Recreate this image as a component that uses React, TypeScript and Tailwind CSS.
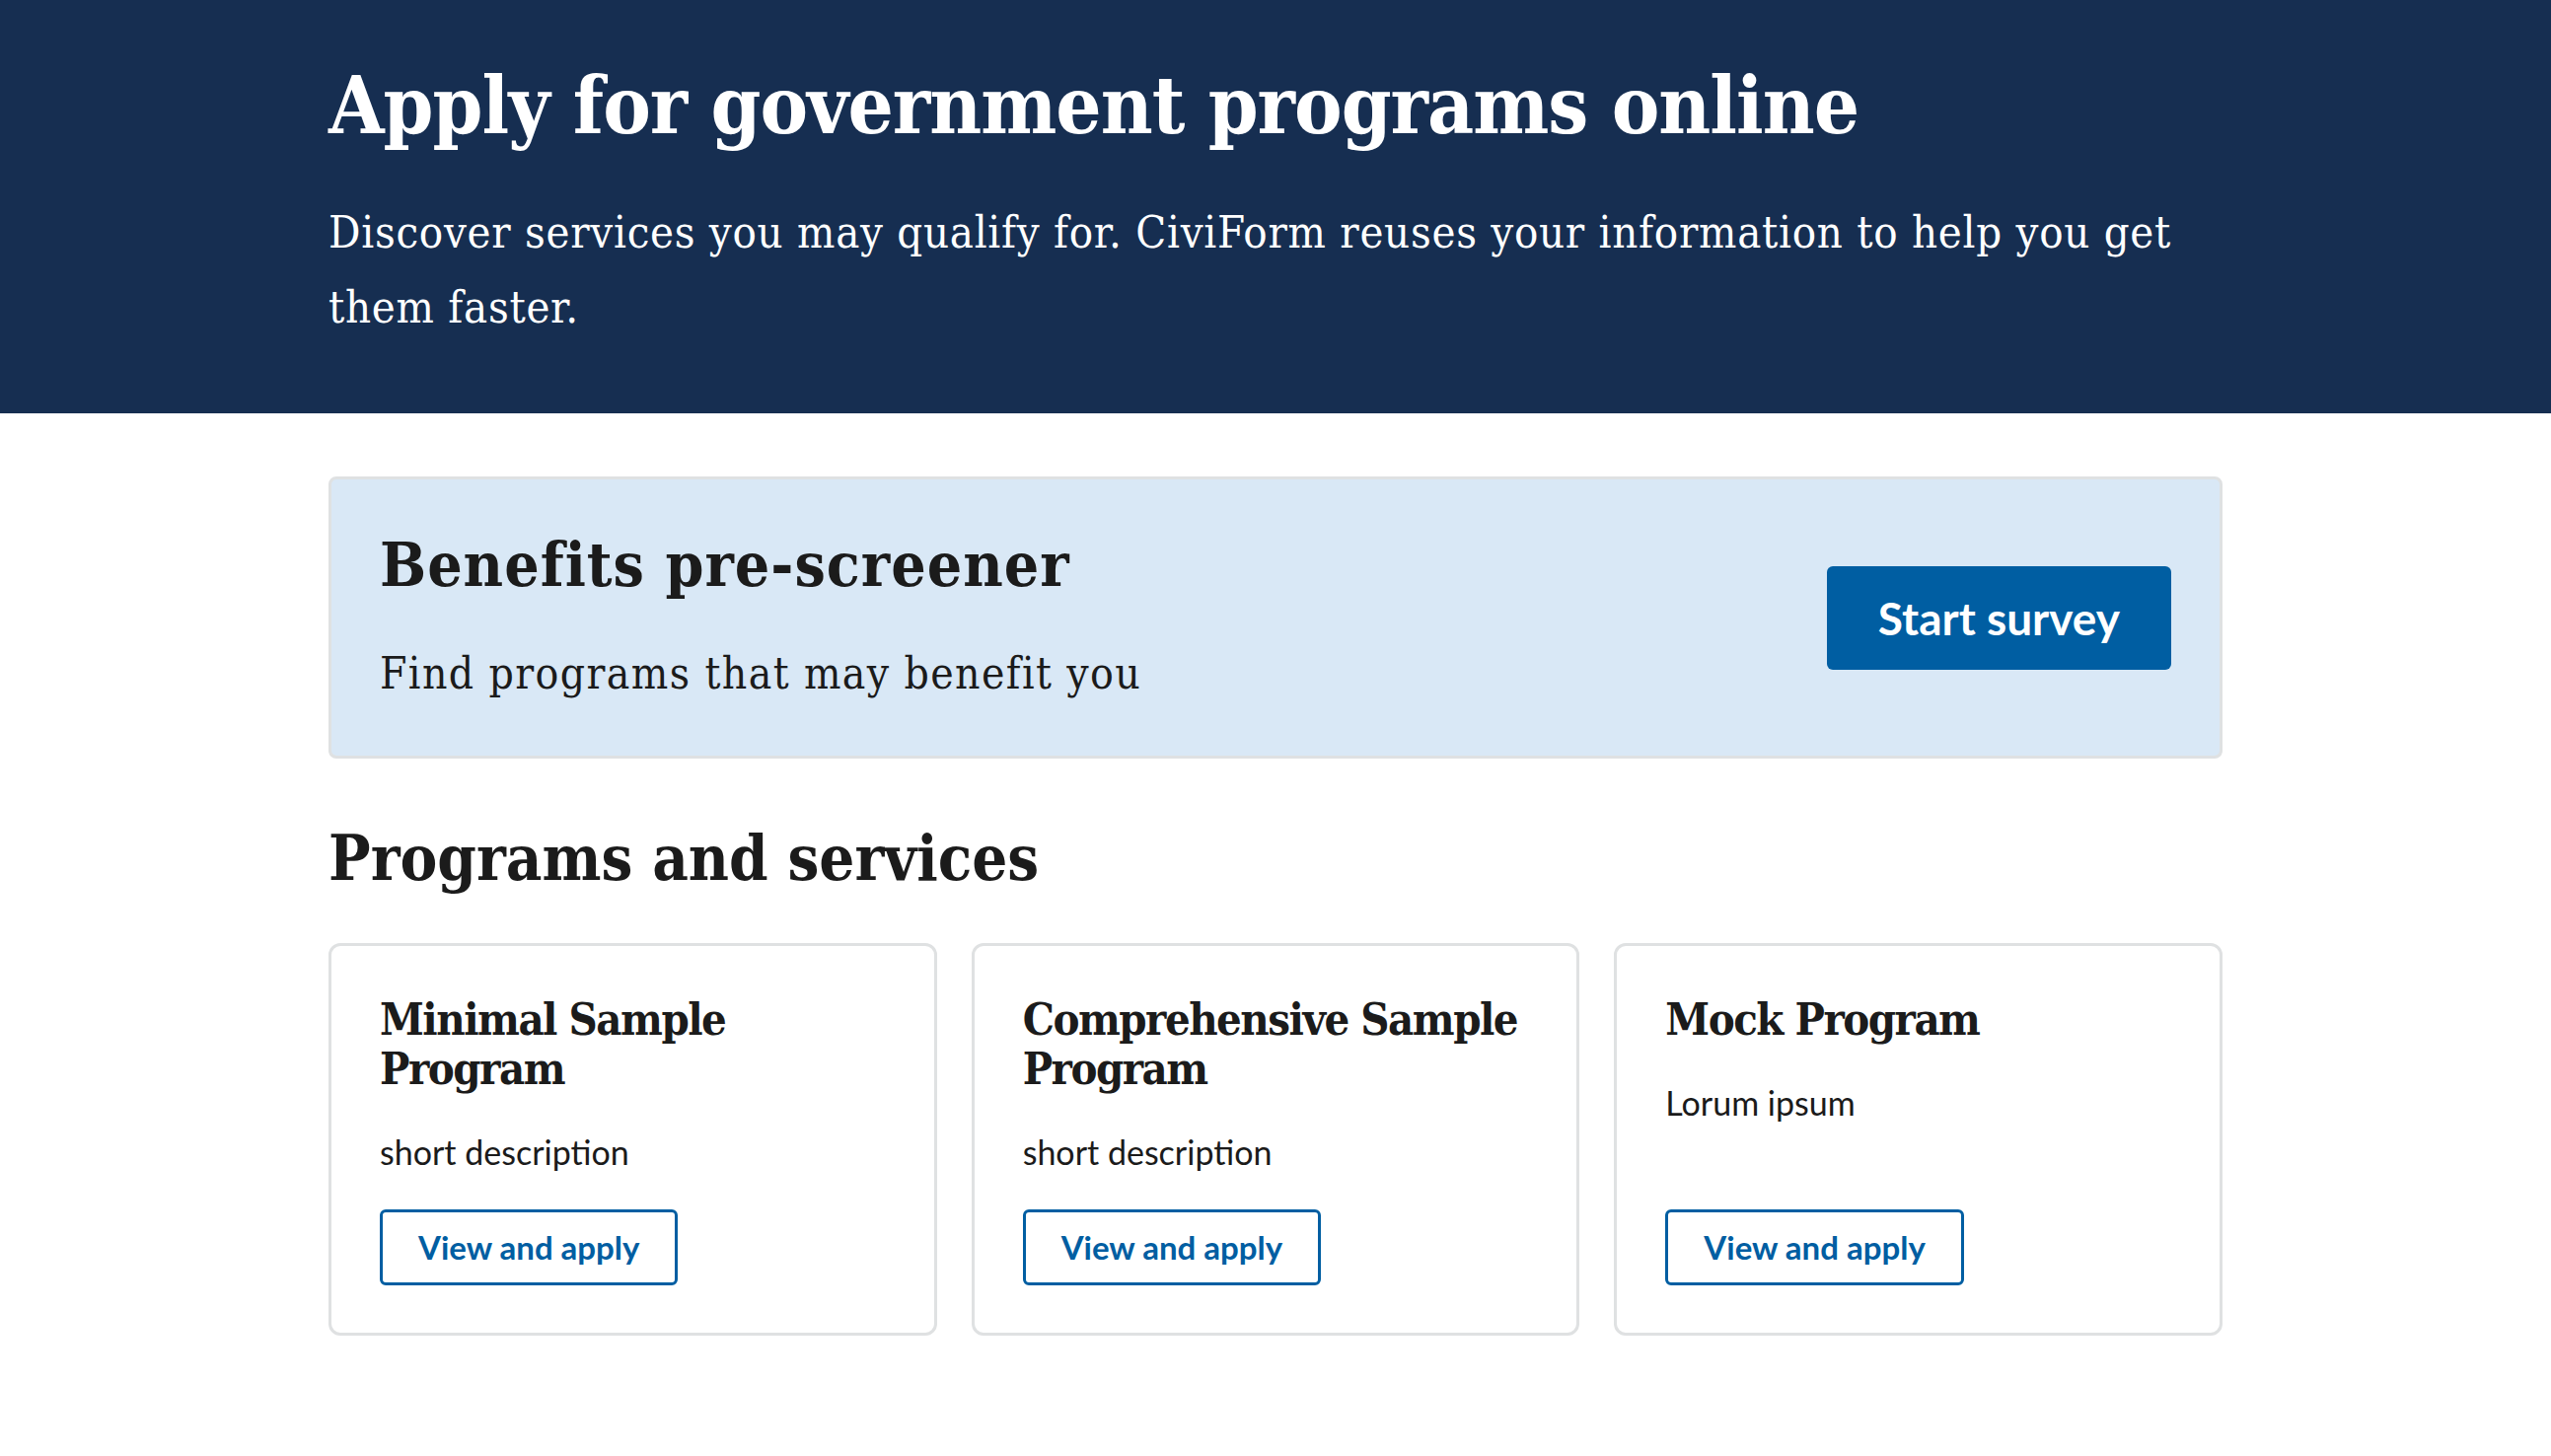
import React from 'react';

const serif = "font-['DejaVu_Serif_Condensed','DejaVu_Serif',serif]";
const sans = "font-['Lato',sans-serif]";

interface Program {
  id: string;
  name: string;
  description: string;
}

const programs: Program[] = [
  { id: 'minimal', name: 'Minimal Sample Program', description: 'short description' },
  { id: 'comprehensive', name: 'Comprehensive Sample Program', description: 'short description' },
  { id: 'mock', name: 'Mock Program', description: 'Lorum ipsum' },
];

function ProgramCard({ program }: { program: Program }) {
  return (
    <div className="flex flex-col rounded-[12px] border-[3px] border-[#dfe1e2] bg-white px-[49px] pt-[50px] pb-[48px]">
      <h3 className={`${serif} text-[45px] font-bold leading-[50px] tracking-[-1.5px] text-[#1b1b1b]`}>{program.name}</h3>
      <p className={`${sans} mt-[33px] text-[34px] leading-[51px] text-[#1b1b1b]`}>{program.description}</p>
      <div className="mt-auto pt-[33px]">
        <button
          type="button"
          className={`${sans} h-[77px] rounded-[6px] border-[3px] border-[#005ea2] bg-white px-[36px] text-[33px] font-bold text-[#005ea2]`}
        >
          View and apply
        </button>
      </div>
    </div>
  );
}

export default function App() {
  return (
    <div className="min-h-screen bg-white">
      {/* Hero banner */}
      <header className="bg-[#162e51] pt-[58px] pb-[69px]">
        <div className="mx-auto w-[1920px]">
          <h1 className={`${serif} text-[81px] font-bold leading-[97px] tracking-[-1px] text-white`}>
            Apply for government programs online
          </h1>
          <p className={`${serif} mt-[43px] text-[45px] leading-[76px] tracking-[0.75px] text-white`}>
            Discover services you may qualify for. CiviForm reuses your information to help you get them faster.
          </p>
        </div>
      </header>

      <main className="mx-auto w-[1920px] pt-[64px] pb-[80px]">
        {/* Pre-screener callout */}
        <div className="flex items-center justify-between rounded-[8px] border-[3px] border-[#dfe1e2] bg-[#d9e8f6] py-[50px] pr-[49px] pl-[49px]">
          <div>
            <h2 className={`${serif} text-[62px] font-bold leading-[74px] tracking-[1px] text-[#1b1b1b]`}>
              Benefits pre-screener
            </h2>
            <p className={`${serif} mt-[40px] text-[44px] leading-[66px] tracking-[1.4px] text-[#1b1b1b]`}>
              Find programs that may benefit you
            </p>
          </div>
          <button
            type="button"
            className={`${sans} h-[105px] rounded-[6px] bg-[#005ea2] px-[52px] text-[46px] font-bold text-white`}
          >
            Start survey
          </button>
        </div>

        <h2 className={`${serif} mt-[63px] text-[63px] font-bold leading-[76px] text-[#1b1b1b]`}>
          Programs and services
        </h2>

        <div className="mt-[48px] grid grid-cols-3 gap-[35px]">
          {programs.map(p => (
            <ProgramCard key={p.id} program={p} />
          ))}
        </div>
      </main>
    </div>
  );
}
